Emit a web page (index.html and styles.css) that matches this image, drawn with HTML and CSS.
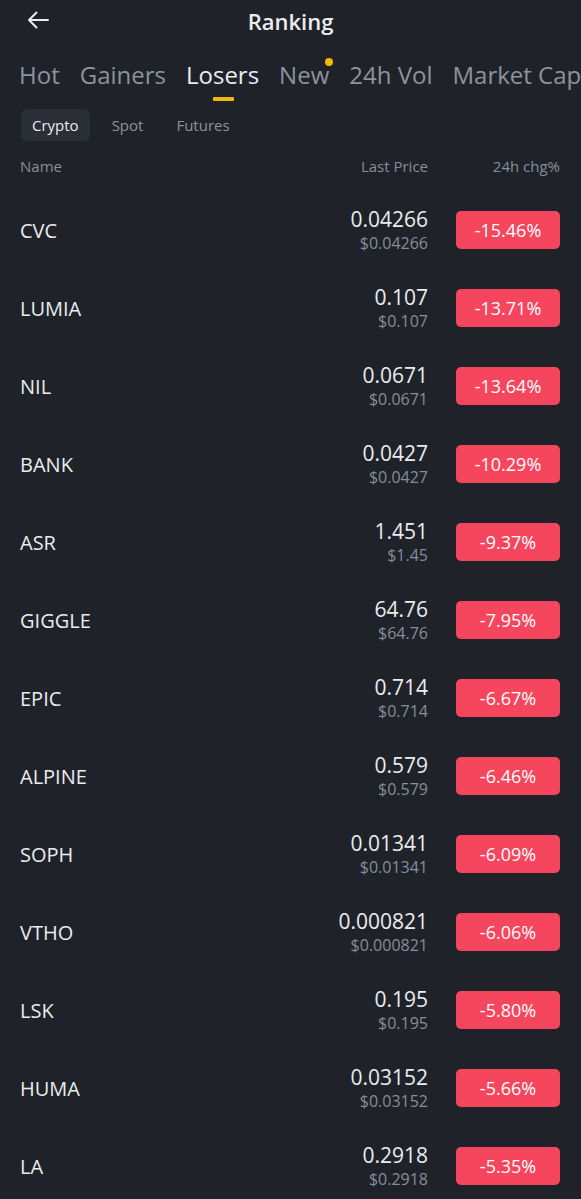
FILE: index.html
```html
<!DOCTYPE html>
<html>
<head>
<meta charset="utf-8">
<link rel="stylesheet" href="styles.css">
</head>
<body>
<div class="app">
  <header class="topbar">
    <svg class="back" width="22" height="18" viewBox="0 0 22 18"><path d="M21 9H2M9.5 1.5L2 9l7.5 7.5" fill="none" stroke="#eaecef" stroke-width="2" stroke-linecap="round" stroke-linejoin="round"/></svg>
    <h1 class="title">Ranking</h1>
  </header>
  <nav class="tabs">
    <span class="tab">Hot</span>
    <span class="tab">Gainers</span>
    <span class="tab active">Losers</span>
    <span class="tab dot">New</span>
    <span class="tab">24h Vol</span>
    <span class="tab">Market Cap</span>
  </nav>
  <div class="subtabs">
    <span class="sub active">Crypto</span>
    <span class="sub">Spot</span>
    <span class="sub">Futures</span>
  </div>
  <div class="colhead">
    <span class="c-name">Name</span>
    <span class="c-price">Last Price</span>
    <span class="c-chg">24h chg%</span>
  </div>
  <ul class="list">
    <li class="row"><span class="name">CVC</span><div class="price"><span class="p">0.04266</span><span class="u">$0.04266</span></div><span class="chg">-15.46%</span></li>
    <li class="row"><span class="name">LUMIA</span><div class="price"><span class="p">0.107</span><span class="u">$0.107</span></div><span class="chg">-13.71%</span></li>
    <li class="row"><span class="name">NIL</span><div class="price"><span class="p">0.0671</span><span class="u">$0.0671</span></div><span class="chg">-13.64%</span></li>
    <li class="row"><span class="name">BANK</span><div class="price"><span class="p">0.0427</span><span class="u">$0.0427</span></div><span class="chg">-10.29%</span></li>
    <li class="row"><span class="name">ASR</span><div class="price"><span class="p">1.451</span><span class="u">$1.45</span></div><span class="chg">-9.37%</span></li>
    <li class="row"><span class="name">GIGGLE</span><div class="price"><span class="p">64.76</span><span class="u">$64.76</span></div><span class="chg">-7.95%</span></li>
    <li class="row"><span class="name">EPIC</span><div class="price"><span class="p">0.714</span><span class="u">$0.714</span></div><span class="chg">-6.67%</span></li>
    <li class="row"><span class="name">ALPINE</span><div class="price"><span class="p">0.579</span><span class="u">$0.579</span></div><span class="chg">-6.46%</span></li>
    <li class="row"><span class="name">SOPH</span><div class="price"><span class="p">0.01341</span><span class="u">$0.01341</span></div><span class="chg">-6.09%</span></li>
    <li class="row"><span class="name">VTHO</span><div class="price"><span class="p">0.000821</span><span class="u">$0.000821</span></div><span class="chg">-6.06%</span></li>
    <li class="row"><span class="name">LSK</span><div class="price"><span class="p">0.195</span><span class="u">$0.195</span></div><span class="chg">-5.80%</span></li>
    <li class="row"><span class="name">HUMA</span><div class="price"><span class="p">0.03152</span><span class="u">$0.03152</span></div><span class="chg">-5.66%</span></li>
    <li class="row"><span class="name">LA</span><div class="price"><span class="p">0.2918</span><span class="u">$0.2918</span></div><span class="chg">-5.35%</span></li>
  </ul>
</div>
</body>
</html>
```
FILE: styles.css
```css
html, body {
  margin: 0;
  padding: 0;
  background: #1f2329;
}
body {
  font-family: "Open Sans", "Noto Sans", sans-serif;
  color: #eaecef;
  overflow: hidden;
}
.app {
  width: 581px;
  height: 1199px;
  overflow: hidden;
}
.topbar {
  position: relative;
  height: 42px;
  display: flex;
  align-items: center;
  justify-content: center;
}
.back {
  position: absolute;
  left: 27px;
  top: 11px;
}
.title {
  margin: 0;
  font-size: 22px;
  font-weight: 600;
  color: #eaecef;
}
.tabs {
  display: flex;
  gap: 20px;
  padding: 18px 0 0 19px;
  height: 61px;
  align-items: flex-start;
  box-sizing: border-box;
  white-space: nowrap;
}
.tab {
  position: relative;
  font-size: 24px;
  line-height: 30px;
  color: #8b939e;
}
.tab.active {
  color: #eaecef;
}
.tab.active::after {
  content: "";
  position: absolute;
  left: 50%;
  top: 37px;
  width: 21px;
  height: 4px;
  margin-left: -10px;
  background: #f0b90b;
  border-radius: 1px;
}
.tab.dot::after {
  content: "";
  position: absolute;
  right: -4px;
  top: -2px;
  width: 8px;
  height: 8px;
  border-radius: 50%;
  background: #f0b90b;
}
.subtabs {
  display: flex;
  gap: 11px;
  padding: 6px 0 0 21px;
  height: 38px;
  align-items: flex-start;
  box-sizing: border-box;
}
.sub {
  font-size: 15px;
  line-height: 32px;
  padding: 0 11px;
  color: #8b939e;
  border-radius: 6px;
}
.sub.active {
  background: #2a2f37;
  color: #eaecef;
}
.colhead {
  display: flex;
  align-items: center;
  height: 50px;
  padding: 0 21px 0 20px;
  font-size: 15px;
  color: #848e9c;
}
.c-name { flex: 1; }
.c-price { width: 150px; text-align: right; }
.c-chg { width: 132px; text-align: right; }
.list {
  list-style: none;
  margin: 0;
  padding: 0;
}
.row {
  display: flex;
  align-items: center;
  height: 78px;
  padding: 0 21px 0 20px;
}
.name {
  flex: 1;
  font-size: 20px;
  color: #eaecef;
}
.price {
  display: flex;
  flex-direction: column;
  align-items: flex-end;
}
.p {
  font-size: 21px;
  line-height: 26px;
  font-weight: 500;
  color: #eaecef;
}
.u {
  font-size: 16px;
  line-height: 22px;
  color: #848e9c;
}
.chg {
  margin-left: 28px;
  width: 104px;
  height: 38px;
  border-radius: 5px;
  background: #f6465d;
  color: #fff;
  font-size: 18px;
  font-weight: 500;
  display: flex;
  align-items: center;
  justify-content: center;
}
```
